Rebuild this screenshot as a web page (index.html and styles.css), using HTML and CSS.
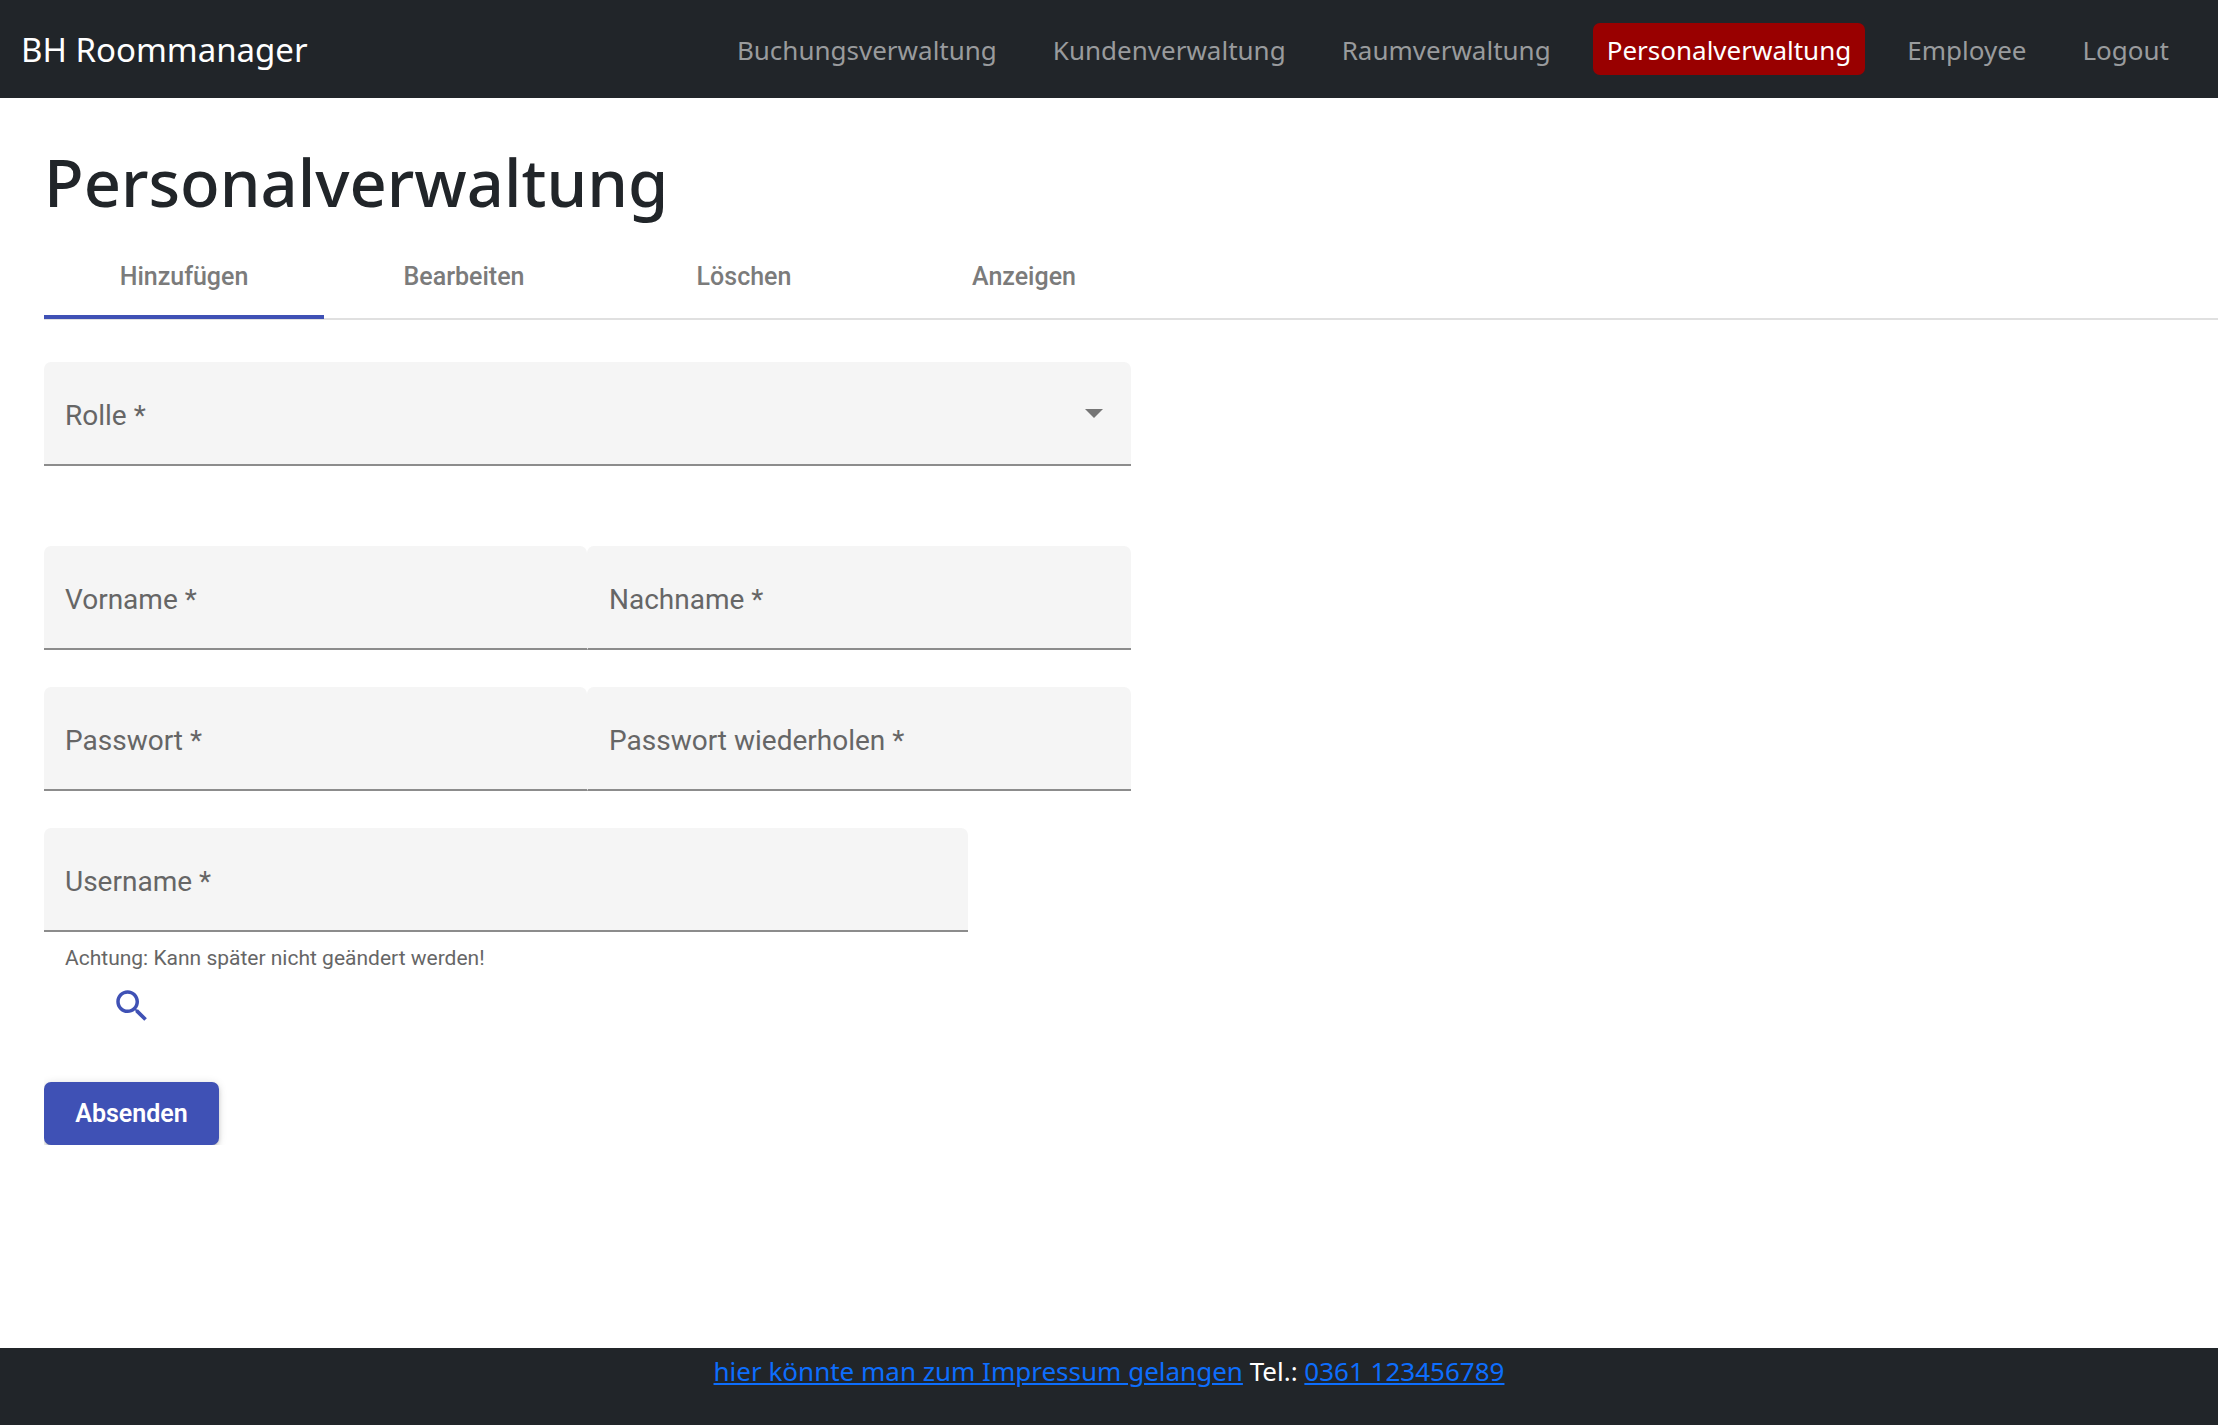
FILE: index.html
```html
<!DOCTYPE html>
<html lang="de">
<head>
  <meta charset="utf-8">
  <meta name="viewport" content="width=device-width, initial-scale=1">
  <title>BH Roommanager – Personalverwaltung</title>
  <link rel="stylesheet" href="styles.css">
</head>
<body>
  <header class="navbar">
    <a class="brand" href="#">BH Roommanager</a>
    <nav class="nav" aria-label="Hauptnavigation">
      <a class="nav-link" href="#">Buchungsverwaltung</a>
      <a class="nav-link" href="#">Kundenverwaltung</a>
      <a class="nav-link" href="#">Raumverwaltung</a>
      <a class="nav-link active" href="#" aria-current="page">Personalverwaltung</a>
      <a class="nav-link" href="#">Employee</a>
      <a class="nav-link" href="#">Logout</a>
    </nav>
  </header>

  <main class="content">
    <h1 class="title">Personalverwaltung</h1>

    <div class="tabs" role="tablist">
      <button class="tab selected" type="button" role="tab" aria-selected="true">Hinzufügen</button>
      <button class="tab" type="button" role="tab" aria-selected="false">Bearbeiten</button>
      <button class="tab" type="button" role="tab" aria-selected="false">Löschen</button>
      <button class="tab" type="button" role="tab" aria-selected="false">Anzeigen</button>
    </div>

    <form class="form">
      <div class="row row-role">
        <div class="field">
          <select class="control" id="role" required>
            <option value=""></option>
          </select>
          <label class="label" for="role">Rolle *</label>
          <svg class="arrow" viewBox="0 0 18 9" aria-hidden="true"><path d="M0 0h18L9 9z"/></svg>
        </div>
      </div>
      <div class="row">
        <div class="field">
          <input class="control" id="firstname" type="text" required>
          <label class="label" for="firstname">Vorname *</label>
        </div>
        <div class="field">
          <input class="control" id="lastname" type="text" required>
          <label class="label" for="lastname">Nachname *</label>
        </div>
      </div>
      <div class="row">
        <div class="field">
          <input class="control" id="password" type="password" required>
          <label class="label" for="password">Passwort *</label>
        </div>
        <div class="field">
          <input class="control" id="password-repeat" type="password" required>
          <label class="label" for="password-repeat">Passwort wiederholen *</label>
        </div>
      </div>
      <div class="user">
        <div class="field">
          <input class="control" id="username" type="text" aria-describedby="username-hint" required>
          <label class="label" for="username">Username *</label>
        </div>
        <p class="hint" id="username-hint">Achtung: Kann später nicht geändert werden!</p>
      </div>
      <button class="search" type="button" aria-label="Username suchen">
        <svg class="search-icon" viewBox="0 0 24 24" aria-hidden="true"><path d="M15.5 14h-.79l-.28-.27C15.41 12.59 16 11.11 16 9.5 16 5.91 13.09 3 9.5 3S3 5.91 3 9.5 5.91 16 9.5 16c1.61 0 3.09-.59 4.23-1.57l.27.28v.79l5 4.99L20.49 19l-4.99-5zm-6 0C7.01 14 5 11.99 5 9.5S7.01 5 9.5 5 14 7.01 14 9.5 11.99 14 9.5 14z"/></svg>
      </button>
      <button class="submit" type="submit">Absenden</button>
    </form>
  </main>

  <footer class="footer">
    <a class="footer-link" href="#">hier könnte man zum Impressum gelangen</a>
    Tel.: <a class="footer-link" href="tel:0361123456789">0361 123456789</a>
  </footer>
</body>
</html>
```
FILE: styles.css
```css
*,
*::before,
*::after {
  box-sizing: border-box;
}

body {
  display: flex;
  flex-direction: column;
  min-height: 100vh;
  margin: 0;
  background: #fff;
  color: #212529;
  font-family: "Segoe UI", "Noto Sans", sans-serif;
  font-size: 26px;
  line-height: 42px;
}

button,
input,
select {
  margin: 0;
  padding: 0;
  border: 0;
  background: none;
  font-family: Roboto, sans-serif;
}

button {
  cursor: pointer;
}

/* Navigation */
.navbar {
  display: flex;
  align-items: center;
  justify-content: space-between;
  min-height: 98px;
  padding: 0 35px 0 21px;
  background: #212529;
}

.brand {
  padding-top: 2px;
  color: #fff;
  font-size: 33px;
  text-decoration: none;
}

.nav {
  display: flex;
  gap: 28px;
}

.nav-link {
  padding: 6px 14px 4px;
  border-radius: 7px;
  color: #999b9d;
  text-decoration: none;
}

.nav-link.active {
  background: #900;
  color: #fff;
}

/* Page */
.content {
  flex: 1;
  padding: 42px 0 42px 44px;
}

.title {
  margin: 0;
  font-size: 65px;
  font-weight: 500;
  line-height: 84px;
}

.tabs {
  display: flex;
  margin-top: 12px;
  border-bottom: 2px solid #e0e0e0;
}

.tab {
  width: 280px;
  height: 83px;
  margin-bottom: -1px;
  padding-top: 2px;
  border-bottom: 4px solid transparent;
  color: #7b7b7b;
  font-size: 25px;
  font-weight: 500;
}

.tab.selected {
  border-color: #3f51b5;
}

/* Form */
.form {
  width: 50%;
  margin-top: 42px;
  overflow: hidden;
}

.row {
  display: flex;
  margin-bottom: 37px;
}

.row-role {
  margin-bottom: 80px;
}

.field {
  display: grid;
  flex: 1;
  align-items: center;
  height: 104px;
  border-bottom: 2px solid #8c8c8c;
  border-radius: 7px 7px 0 0;
  background: #f5f5f5;
}

/* Keeps the underlines of neighbouring fields apart */
.field + .field {
  border-left: 1px solid #f5f5f5;
}

.field > * {
  grid-area: 1 / 1;
}

.control {
  width: 100%;
  height: 100%;
  padding: 0 21px;
  appearance: none;
  font-size: 28px;
}

.label {
  padding: 6px 21px 0;
  color: #666;
  font-family: Roboto, sans-serif;
  font-size: 28px;
  pointer-events: none;
}

.arrow {
  justify-self: end;
  width: 18px;
  height: 9px;
  margin-right: 28px;
  fill: #757575;
  pointer-events: none;
}

.user {
  width: 85%;
}

.hint {
  margin: 5px 21px 0;
  color: #666;
  font-family: Roboto, sans-serif;
  font-size: 21px;
}

.search {
  display: block;
  width: 42px;
  height: 42px;
  margin: 6px 0 55px 67px;
}

.search-icon {
  display: block;
  fill: #3f51b5;
}

.submit {
  display: block;
  width: 175px;
  height: 63px;
  border-radius: 7px;
  background: #3f51b5;
  box-shadow: 0 4px 2px -3px #0003, 0 3px 4px #0002, 0 1px 8px #0002;
  color: #fff;
  font-size: 25px;
  font-weight: 600;
}

/* Footer */
.footer {
  min-height: 77px;
  padding: 2px 21px;
  background: #212529;
  color: #fff;
  text-align: center;
}

.footer-link {
  color: #0d6efd;
}
```
